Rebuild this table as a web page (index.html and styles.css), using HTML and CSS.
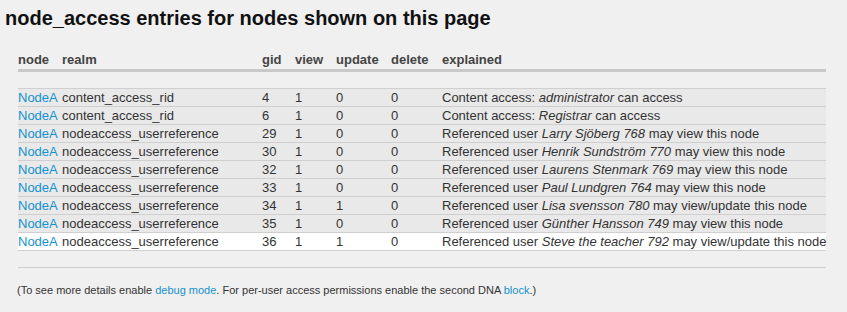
FILE: index.html
```html
<!DOCTYPE html>
<html>
    <head>
        <title>node_access entries</title>
        <link rel="stylesheet" href="styles.css">
    </head>
    <body>
        <h2 class="title">node_access entries for nodes shown on this page</h2>

        <table class="access-table">
            <thead>
                <tr>
                    <th class="col-node">node</th>
                    <th class="col-realm">realm</th>
                    <th class="col-gid">gid</th>
                    <th class="col-view">view</th>
                    <th class="col-update">update</th>
                    <th class="col-delete">delete</th>
                    <th>explained</th>
                </tr>
            </thead>
            <tbody>
                <tr class="spacer"><td colspan="7"></td></tr>
                <tr>
                    <td><a href="#">NodeA</a></td>
                    <td>content_access_rid</td>
                    <td>4</td><td>1</td><td>0</td><td>0</td>
                    <td>Content access: <em>administrator</em> can access</td>
                </tr>
                <tr>
                    <td><a href="#">NodeA</a></td>
                    <td>content_access_rid</td>
                    <td>6</td><td>1</td><td>0</td><td>0</td>
                    <td>Content access: <em>Registrar</em> can access</td>
                </tr>
                <tr>
                    <td><a href="#">NodeA</a></td>
                    <td>nodeaccess_userreference</td>
                    <td>29</td><td>1</td><td>0</td><td>0</td>
                    <td>Referenced user <em>Larry Sjöberg 768</em> may view this node</td>
                </tr>
                <tr>
                    <td><a href="#">NodeA</a></td>
                    <td>nodeaccess_userreference</td>
                    <td>30</td><td>1</td><td>0</td><td>0</td>
                    <td>Referenced user <em>Henrik Sundström 770</em> may view this node</td>
                </tr>
                <tr>
                    <td><a href="#">NodeA</a></td>
                    <td>nodeaccess_userreference</td>
                    <td>32</td><td>1</td><td>0</td><td>0</td>
                    <td>Referenced user <em>Laurens Stenmark 769</em> may view this node</td>
                </tr>
                <tr>
                    <td><a href="#">NodeA</a></td>
                    <td>nodeaccess_userreference</td>
                    <td>33</td><td>1</td><td>0</td><td>0</td>
                    <td>Referenced user <em>Paul Lundgren 764</em> may view this node</td>
                </tr>
                <tr>
                    <td><a href="#">NodeA</a></td>
                    <td>nodeaccess_userreference</td>
                    <td>34</td><td>1</td><td>1</td><td>0</td>
                    <td>Referenced user <em>Lisa svensson 780</em> may view/update this node</td>
                </tr>
                <tr>
                    <td><a href="#">NodeA</a></td>
                    <td>nodeaccess_userreference</td>
                    <td>35</td><td>1</td><td>0</td><td>0</td>
                    <td>Referenced user <em>Günther Hansson 749</em> may view this node</td>
                </tr>
                <tr class="highlight">
                    <td><a href="#">NodeA</a></td>
                    <td>nodeaccess_userreference</td>
                    <td>36</td><td>1</td><td>1</td><td>0</td>
                    <td>Referenced user <em>Steve the teacher 792</em> may view/update this node</td>
                </tr>
                <tr class="spacer end"><td colspan="7"></td></tr>
            </tbody>
        </table>

        <p class="note">(To see more details enable <a href="#">debug mode</a>. For per-user access permissions enable the second DNA <a href="#">block</a>.)</p>
    </body>
</html>
```
FILE: styles.css
```css
body {
    margin: 0;
    background-color: #f0f0f0;
    font-family: "Liberation Sans", Arial, sans-serif;
    color: #333;
}

a {
    color: #1591cf;
    text-decoration: none;
}

.title {
    margin: 0;
    padding: 7px 5px 0;
    font-size: 20px;
    line-height: 23px;
    font-weight: bold;
    color: #111;
}

.access-table {
    margin: 20px 0 0 18px;
    border-collapse: collapse;
    font-size: 13px;
}

.access-table th {
    padding: 2px 0 1px;
    height: 16px;
    line-height: 16px;
    text-align: left;
    font-weight: bold;
    color: #444;
    border-bottom: 3px solid #c9c9c9;
}

.access-table td {
    padding: 0;
    height: 17px;
    line-height: 17px;
    white-space: nowrap;
    background-color: #e9e9e9;
    border-bottom: 1px solid #cfcfcf;
}

.access-table tr.spacer td {
    background-color: transparent;
    height: 16px;
}

.access-table tr.highlight td {
    background-color: #fff;
}

.col-node {
    width: 44px;
}

.col-realm {
    width: 200px;
}

.col-gid {
    width: 33px;
}

.col-view {
    width: 41px;
}

.col-update {
    width: 55px;
}

.col-delete {
    width: 51px;
}

.note {
    margin: 16px 0 0 17px;
    font-size: 11px;
    color: #333;
}
```
